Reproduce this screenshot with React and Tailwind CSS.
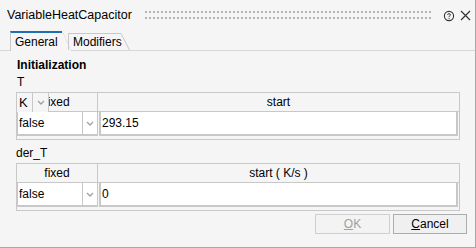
import React from 'react';

const font = { fontFamily: '"Liberation Sans", Arial, sans-serif' };

const Chevron = () => (
  <svg width="8" height="5" viewBox="0 0 8 5">
    <path d="M1 1 L4 4 L7 1" fill="none" stroke="#a0a0a0" strokeWidth="1.3" />
  </svg>
);

const Grip = () => (
  <svg width="286" height="9" className="block">
    <defs>
      <pattern id="dots" width="4" height="6" patternUnits="userSpaceOnUse">
        <rect x="0" y="0" width="2" height="2" fill="#b4b4b4" />
      </pattern>
    </defs>
    <rect x="0" y="0" width="286" height="9" fill="url(#dots)" />
  </svg>
);

const ParamTable = ({ header, value, unitBox }) => (
  <div className="ml-4 mr-4 w-[444px] border border-[#c8c8c8] pb-[3px]">
    <div className="relative flex h-[19px] text-[12px]">
      <div className="flex w-[81px] items-center justify-center border-r border-b border-[#c8c8c8]">fixed</div>
      <div className="flex flex-1 items-center justify-center border-b border-[#c8c8c8]">{header}</div>
      {unitBox && (
        <div className="absolute left-0 top-0 flex h-[19px] bg-[#f5f5f5]">
          <div className="flex w-[16px] items-center pl-[2px] border-r border-[#c8c8c8] text-[13px]">K</div>
          <div className="flex w-[16px] items-center justify-center border-r border-[#c8c8c8]"><Chevron /></div>
        </div>
      )}
    </div>
    <div className="flex h-[24px] text-[12px]">
      <div className="flex w-[66px] items-center border-2 border-[#c8c8c8] border-t-0 border-r border-l-[1px] bg-white pl-[1px]">false</div>
      <div className="flex w-[15px] items-center justify-center border-b-2 border-r border-[#c8c8c8] bg-white"><Chevron /></div>
      <div className="ml-[1px] flex flex-1 items-center border-2 border-t-0 border-[#c8c8c8] bg-white pl-[1px] mr-[1px]">{value}</div>
    </div>
  </div>
);

export default function App() {
  return (
    <div style={font} className="h-[248px] w-[476px] overflow-hidden border-r border-b border-[#a8a8a8] bg-[#f5f5f5] text-black">
      <div className="flex h-[31px] items-center">
        <span className="ml-[7px] w-[138px] text-[12.5px] leading-none">VariableHeatCapacitor</span>
        <Grip />
        <svg width="12" height="12" viewBox="0 0 12 12" className="ml-[12px]">
          <circle cx="6" cy="6" r="4.6" fill="none" stroke="#333" strokeWidth="1.1" />
          <path d="M4.5 4.8 C4.5 3.4 7.5 3.4 7.5 4.8 C7.5 5.8 6 5.8 6 7" fill="none" stroke="#333" strokeWidth="1" />
          <rect x="5.5" y="7.9" width="1" height="1" fill="#333" />
        </svg>
        <svg width="11" height="11" viewBox="0 0 11 11" className="ml-[5px]">
          <path d="M1 1 L10 10 M10 1 L1 10" stroke="#333" strokeWidth="1.2" />
        </svg>
      </div>
      <div className="flex h-[20px] items-end border-b border-[#d8d8d8] pl-[10px]">
        <div className="relative -mb-px flex h-[20px] w-[52px] items-center border-t-2 border-l border-[#1f6fb2] border-l-[#c8c8c8] bg-[#f5f5f5] pl-[4px] text-[12px]">
          General
          <svg width="9" height="20" className="absolute -right-[9px] -top-[2px]">
            <path d="M0 0.5 L8.5 19.5" stroke="#c8c8c8" strokeWidth="1" />
            <path d="M0 0 L0 20 L9 20 Z" fill="#f5f5f5" />
          </svg>
        </div>
        <div className="relative ml-[6px] flex h-[17px] w-[53px] items-center border-t border-l border-[#c8c8c8] pl-[4px] text-[12px]">
          Modifiers
          <svg width="9" height="17" className="absolute -right-[9px] -top-px">
            <path d="M0 0.5 L8.5 17" stroke="#c8c8c8" strokeWidth="1" />
          </svg>
        </div>
      </div>
      <div className="pt-[7px] pl-[17px] text-[12px] font-bold leading-[14px]">Initialization</div>
      <div className="pt-[3px] pl-[17px] text-[12px] leading-[14px]">T</div>
      <div className="pt-[3px]">
        <ParamTable header="start" value="293.15" unitBox />
      </div>
      <div className="pt-[6px] pl-[16px] text-[12px] leading-[14px]">der_T</div>
      <div className="pt-[3px]">
        <ParamTable header="start ( K/s )" value="0" />
      </div>
      <div className="flex justify-end gap-[3px] pt-[3px] pr-[8px]">
        <button className="flex h-[20px] w-[75px] items-center justify-center border border-[#cfcfcf] bg-[#f3f3f3] text-[12px] text-[#a0a0a0]">
          <span><span className="underline">O</span>K</span>
        </button>
        <button className="flex h-[20px] w-[74px] items-center justify-center border border-[#adadad] bg-[#f0f0f0] text-[12px]">
          <span><span className="underline">C</span>ancel</span>
        </button>
      </div>
    </div>
  );
}
